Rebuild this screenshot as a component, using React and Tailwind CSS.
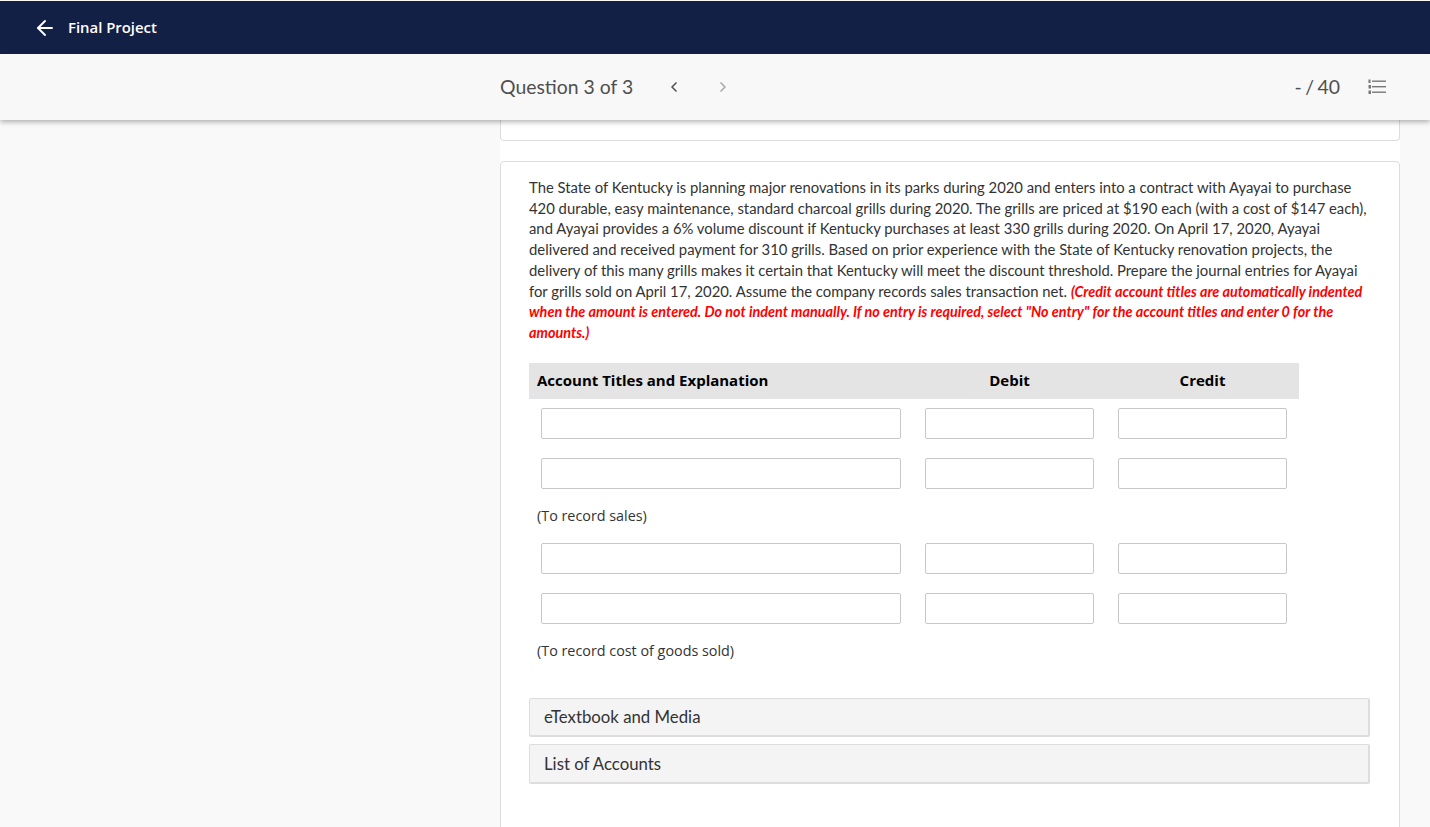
import { ArrowLeft, ChevronLeft, ChevronRight } from 'lucide-react';

const JournalRow = () => (
  <div className="flex h-[50px] pl-3 pt-[9px]">
    <input className="w-[360px] h-[31px] bg-white border border-[#c8c8c8] rounded-[2px]" />
    <input className="ml-6 w-[169px] h-[31px] bg-white border border-[#c8c8c8] rounded-[2px]" />
    <input className="ml-6 w-[169px] h-[31px] bg-white border border-[#c8c8c8] rounded-[2px]" />
  </div>
);

const Note = ({ children }) => (
  <div className="h-[35px] pl-2 pt-[7px] text-[14.35px] leading-[20px] text-[#333] font-['Open_Sans',sans-serif]">
    {children}
  </div>
);

const Panel = ({ className, children }) => (
  <div className={`flex items-center pl-[14px] bg-[#f4f4f4] border border-[#ddd] border-b-2 border-r-2 rounded-[2px] text-[16.8px] text-[#333] ${className}`}>
    {children}
  </div>
);

export default function App() {
  return (
    <div className="h-screen overflow-hidden bg-[#f9f9f9] font-['Lato',sans-serif] flex flex-col">
      {/* Top bar */}
      <div className="mt-px h-[53px] bg-[#132046] flex items-center pl-[33px] text-white shrink-0">
        <ArrowLeft size={24} strokeWidth={1.9} />
        <span className="ml-[11px] text-[14.9px] font-semibold font-['Open_Sans',sans-serif]">Final Project</span>
      </div>

      {/* Question nav */}
      <div className="relative z-10 h-[66px] bg-[#f8f8f8] shadow-[0_2px_5px_rgba(0,0,0,0.3)] flex items-center pl-[500px] shrink-0">
        <span className="text-[19.4px] text-[#4f4f4f]">Question 3 of 3</span>
        <ChevronLeft size={16} strokeWidth={2.5} className="ml-[33px] text-[#555]" />
        <ChevronRight size={16} strokeWidth={2.5} className="ml-[33px] text-[#aaa]" />
        <span className="ml-auto text-[19.4px] text-[#4f4f4f] [word-spacing:-1.5px]">- / 40</span>
        <svg width="18" height="16" viewBox="0 0 18 16" className="ml-[28px] mr-[44px] text-[#777]" fill="currentColor">
          <rect x="0.5" y="0.5" width="2" height="3.5" />
          <rect x="0.5" y="6" width="2.5" height="3.5" />
          <rect x="0.5" y="11.5" width="2.5" height="3.5" />
          <rect x="4" y="1.5" width="14" height="1.4" />
          <rect x="4" y="7" width="14" height="1.4" />
          <rect x="4" y="12.5" width="14" height="1.4" />
        </svg>
      </div>

      {/* Question column */}
      <div className="ml-[500px] w-[900px] bg-white flex-1">
        <div className="h-[21px] border border-t-0 border-[#ddd] rounded-b-[4px]" />
        <div className="mt-5 h-[800px] border border-[#ddd] rounded-[4px] pt-[15px] pl-7 pr-[29px]">
          <p className="text-[14.84px] leading-[20.7px] text-[#333]">
            The State of Kentucky is planning major renovations in its parks during 2020 and enters into a contract with Ayayai to purchase 420 durable, easy maintenance, standard charcoal grills during 2020. The grills are priced at $190 each (with a cost of $147 each), and Ayayai provides a 6% volume discount if Kentucky purchases at least 330 grills during 2020. On April 17, 2020, Ayayai delivered and received payment for 310 grills. Based on prior experience with the State of Kentucky renovation projects, the delivery of this many grills makes it certain that Kentucky will meet the discount threshold. Prepare the journal entries for Ayayai for grills sold on April 17, 2020. Assume the company records sales transaction net.{' '}
            <em className="text-[14.4px] leading-none font-bold text-[#ff0000]">
              (Credit account titles are automatically indented when the amount is entered. Do not indent manually. If no entry is required, select "No entry" for the account titles and enter 0 for the amounts.)
            </em>
          </p>

          <div className="mt-[20px] w-[770px]">
            <div className="flex h-9 items-center bg-[#e4e4e4] text-[15px] font-bold text-black font-['Open_Sans',sans-serif]">
              <div className="w-[384px] pl-2">Account Titles and Explanation</div>
              <div className="w-[193px] text-center">Debit</div>
              <div className="w-[193px] text-center">Credit</div>
            </div>
            <JournalRow />
            <JournalRow />
            <Note>(To record sales)</Note>
            <JournalRow />
            <JournalRow />
            <Note>(To record cost of goods sold)</Note>
          </div>

          <div className="mt-[29px] flex flex-col gap-[7px]">
            <Panel className="h-[39px]">eTextbook and Media</Panel>
            <Panel className="h-[40px] pt-px">List of Accounts</Panel>
          </div>
        </div>
      </div>
    </div>
  );
}
